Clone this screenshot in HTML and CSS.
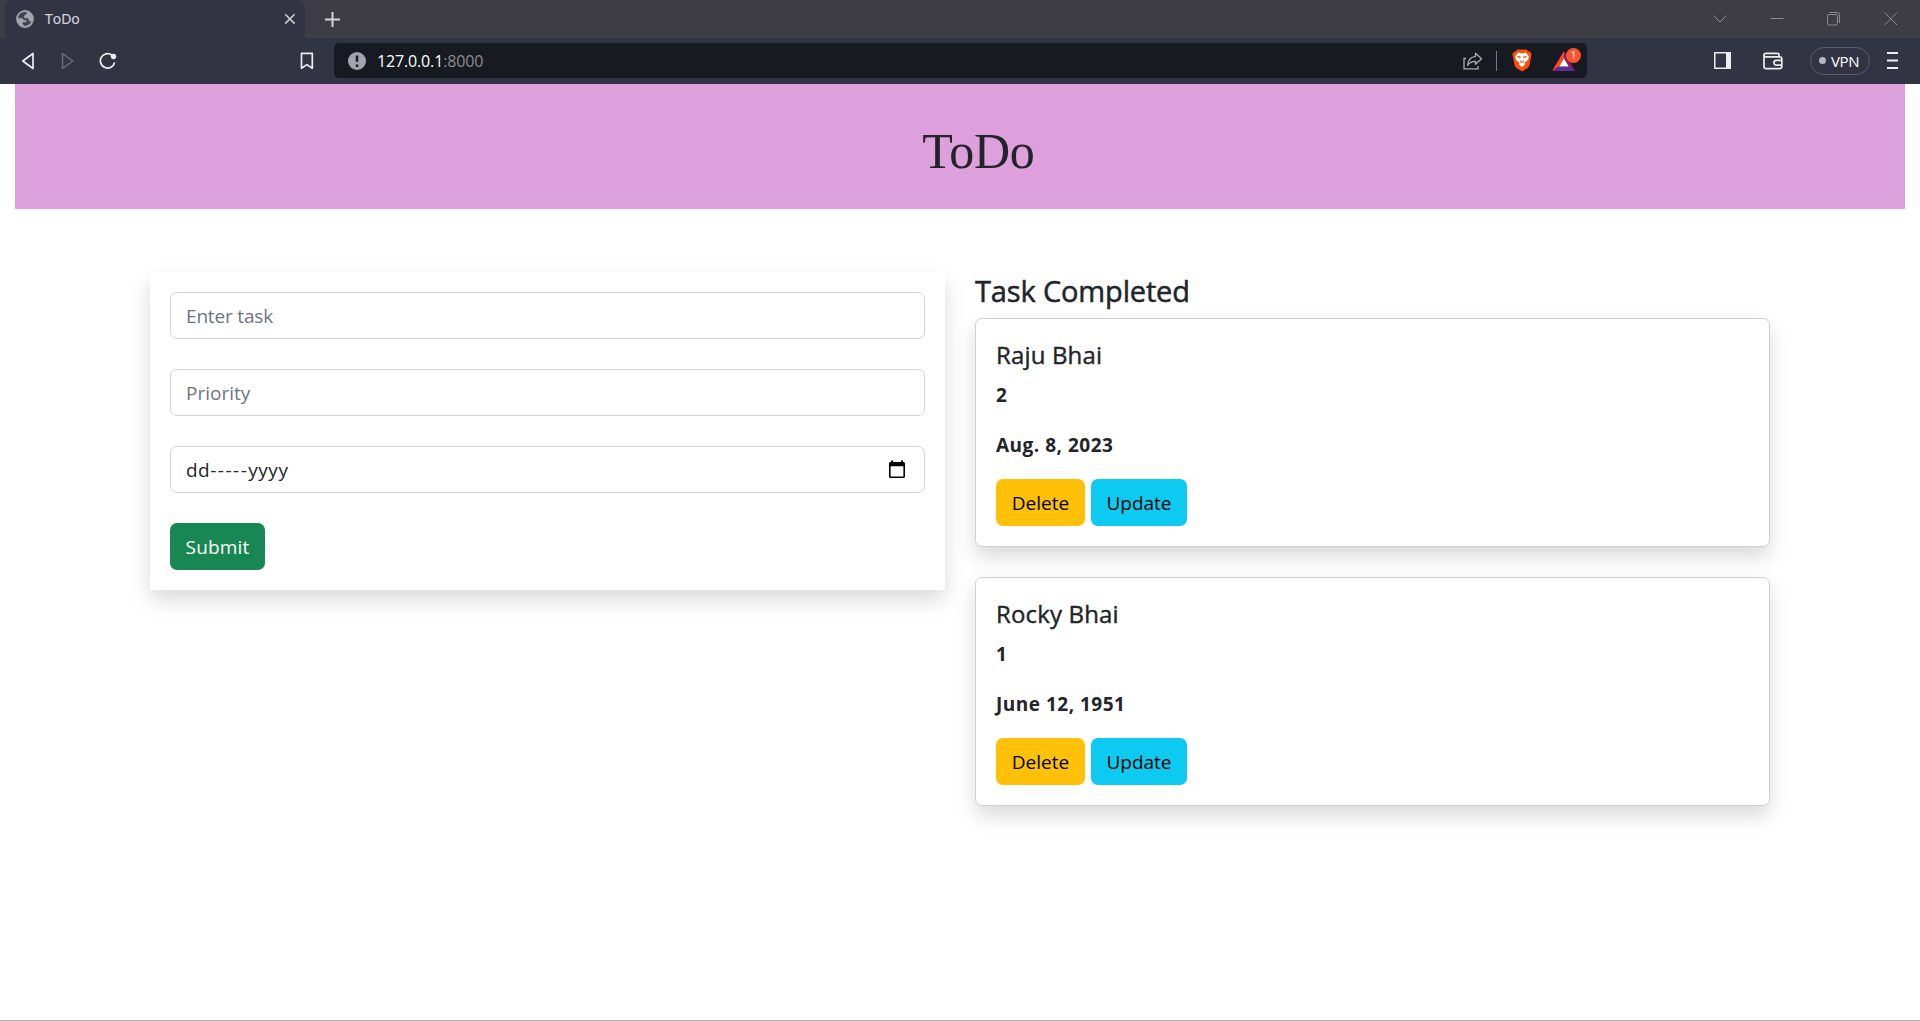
FILE: index.html
```
<!DOCTYPE html>
<html lang="en">
<head>
<meta charset="utf-8">
<title>ToDo</title>
<link rel="stylesheet" href="styles.css">
</head>
<body>
<div class="browser">
  <div class="tabstrip">
    <div class="tab">
      <svg class="favicon" width="18" height="18" viewBox="0 0 18 18"><circle cx="9" cy="9" r="8.900" fill="#a2a5ad"/><path d="M7 2.300Q3.500 3 2.200 6.700V8.300H5.500Q7.600 8.300 7.600 10.200H10.300V12.200H7.200Q6.500 12.200 6.300 13.600L8.600 15.900Q13.800 15.500 15.600 11.200 14.600 11.700 13.500 11.200L12.400 9.800V8.300H9.800Q8.200 8.300 8.200 6.700V5.500H10.300V4.300Q10.300 3.200 11.300 2.500 9 1.800 7 2.300Z" fill="#424551"/><path d="M2 9.500 6.500 13.800V16.500L3 14ZM8.800 4.800V7.200L13 7.500 14 4Z" fill="#a2a5ad"/></svg>
      <span class="tab-title">ToDo</span>
      <svg class="tab-close" width="12" height="12" viewBox="0 0 12 12"><path d="M1.200 1.200 10.600 10.600M10.600 1.200 1.200 10.600" stroke="#cfd0d2" stroke-width="1.500"/></svg>
    </div>
    <svg class="new-tab" width="15" height="15" viewBox="0 0 15 15"><path d="M7.500 0V15M0 7.500H15" stroke="#d5d5d6" stroke-width="2"/></svg>
    <div class="window-controls">
      <svg width="14" height="14" viewBox="0 0 14 14"><path d="M.5 3.500 7 10 13.500 3.500" fill="none" stroke="#8b8b8e"/></svg>
      <svg width="14" height="14" viewBox="0 0 14 14"><path d="M.5 6.500H13.500" stroke="#8b8b8e"/></svg>
      <svg width="14" height="14" viewBox="0 0 14 14"><rect x=".5" y="2.500" width="10" height="10.500" rx="1.500" fill="none" stroke="#8b8b8e"/><path d="M2.500.5H10.500Q12.500.5 12.500 2.500V11" fill="none" stroke="#8b8b8e"/></svg>
      <svg width="14" height="14" viewBox="0 0 14 14"><path d="M.5.5 13 13M13 .5.5 13" stroke="#8b8b8e"/></svg>
    </div>
  </div>
  <div class="toolbar">
    <svg class="back" width="14" height="18" viewBox="0 0 14 18"><path d="M12 1.500V16.500L1.800 9Z" fill="none" stroke="#ecedef" stroke-width="1.700" stroke-linejoin="round"/></svg>
    <svg class="forward" width="14" height="18" viewBox="0 0 14 18"><path d="M1.500 1.500V16.500L11.800 9Z" fill="none" stroke="#6b6d79" stroke-width="1.500" stroke-linejoin="round"/></svg>
    <svg class="reload" width="18" height="18" viewBox="0 0 18 18"><path d="M12.800 3A7.200 7.200 0 1 0 15.600 10.500" fill="none" stroke="#ecedef" stroke-width="1.700"/><circle cx="14.500" cy="4.500" r="2.700" fill="#ecedef"/></svg>
    <svg class="bookmark" width="14" height="18" viewBox="0 0 14 18"><path d="M1.500 1.300H12.300V16.200L6.900 12.600 1.500 16.200Z" fill="none" stroke="#ecedef" stroke-width="1.700" stroke-linejoin="round"/></svg>
    <div class="address">
      <svg class="info" width="18" height="18" viewBox="0 0 18 18"><circle cx="9" cy="9" r="9" fill="#a2a5ad"/><path d="M9 3.500V9.800M9 12.500V15" stroke="#1b1d26" stroke-width="2.500"/></svg>
      <span class="url">127.0.0.1<span class="port">:8000</span></span>
      <svg class="share" width="20" height="18" viewBox="0 0 20 18"><path d="M3 6.500H1V16.800H15V14" fill="none" stroke="#a9abb0" stroke-width="1.300"/><path d="M12.500 1.200 18.600 6.800 12.500 12.300V9.300Q7.800 9 4.600 13.300 5.400 5 12.500 4.300Z" fill="none" stroke="#a9abb0" stroke-width="1.300" stroke-linejoin="round"/></svg>
      <span class="divider"></span>
      <svg class="brave" width="20" height="23" viewBox="0 0 20 23"><path d="M5.500.5H14.500L16.500 2.500H18L19.600 5 19 8 17.300 17 15.500 19 10 22.600 4.500 19 2.700 17 1 8 .4 5 2 2.500H3.500Z" fill="#ff4d0a"/><path d="M6.300 3.600 8.300 4.200H11.700L13.700 3.600 16.900 7.200 15.900 11 12.700 13.600 12.900 15.800 10 18.300 7.100 15.800 7.300 13.600 4.100 11 3.100 7.200Z" fill="#fff"/><path d="M5.200 6.800 8.800 7.600 8.300 9.300 5.800 8.500ZM14.800 6.800 11.200 7.600 11.700 9.300 14.200 8.500ZM8.200 11 9.700 12V13.600L8.400 14.200ZM11.800 11 10.300 12V13.600L11.600 14.200Z" fill="#ff5a1c"/></svg>
      <div class="rewards">
        <svg width="24" height="20" viewBox="0 0 24 20"><path d="M12 0 0 20 7.200 15.500 12 7.500Z" fill="#ff4724"/><path d="M12 0 23 20 16.700 15.500 12 7.500Z" fill="#8f1d66"/><path d="M0 20 7.200 15.500H16.700L23 20Z" fill="#5b3098"/><path d="M12 7.500 16.700 15.500H7.200Z" fill="#fff"/></svg>
        <span class="badge">1</span>
      </div>
    </div>
    <svg class="sidebar" width="17" height="17" viewBox="0 0 17 17"><path d="M.8.8H16.200V16.200H.8Z" fill="none" stroke="#ecedef" stroke-width="1.500"/><path d="M12 0H17V17H12Z" fill="#ecedef"/></svg>
    <svg class="wallet" width="20" height="18" viewBox="0 0 20 18"><path d="M16 4.800V3Q16 1.300 14.300 1.300H3Q1 1.300 1 3V14.500Q1 16.700 3 16.700H16.500Q18.800 16.700 18.800 14.500V7Q18.800 4.800 16.500 4.800H3Q1.200 4.800 1 3" fill="none" stroke="#ecedef" stroke-width="1.700"/><path d="M18.800 8.300H13.300A2.400 2.400 0 0 0 13.300 13.100H18.800" fill="none" stroke="#ecedef" stroke-width="1.700"/></svg>
    <div class="vpn"><span class="dot"></span>VPN</div>
    <svg class="menu" width="11" height="17" viewBox="0 0 11 17"><path d="M0 1H11M0 8.500H11M0 16H11" stroke="#ecedef" stroke-width="1.800"/></svg>
  </div>
</div>
<main class="page">
  <header class="banner"><h1>ToDo</h1></header>
  <div class="columns">
    <form class="task-form">
      <div class="field placeholder task">Enter task</div>
      <div class="field placeholder">Priority</div>
      <div class="field"><span class="date">dd<span class="dashes">-----</span>yyyy</span>
        <svg width="16" height="19" viewBox="0 0 16 19"><path d="M2 .5H4V2H12V.5H14V2H14.500Q16 2 16 3.500V16.500Q16 18 14.500 18H1.500Q0 18 0 16.500V3.500Q0 2 1.500 2H2ZM1.600 6.300V16.500H14.400V6.300Z" fill="#000" fill-rule="evenodd"/></svg>
      </div>
      <button type="button" class="btn submit">Submit</button>
    </form>
    <section class="completed">
      <h4 class="heading">Task Completed</h4>
      <article class="card">
        <h5>Raju Bhai</h5>
        <p>2</p>
        <p>Aug. 8, 2023</p>
        <div class="actions"><button type="button" class="btn delete">Delete</button><button type="button" class="btn update">Update</button></div>
      </article>
      <article class="card">
        <h5>Rocky Bhai</h5>
        <p>1</p>
        <p>June 12, 1951</p>
        <div class="actions"><button type="button" class="btn delete">Delete</button><button type="button" class="btn update">Update</button></div>
      </article>
    </section>
  </div>
</main>
</body>
</html>
```
FILE: styles.css
```
* { box-sizing: border-box; }
body { margin: 0; height: 1021px; overflow: hidden; display: flex; flex-direction: column; background: #fff; color: #212529; font: 19px/30px "Open Sans", "Noto Sans", sans-serif; }
svg { display: block; flex: none; }
.browser { flex: none; }
.tabstrip { height: 38px; display: flex; align-items: center; background: #3e3d46; }
.tab { width: 300px; height: 38px; margin-left: 5px; padding: 0 9px 0 11px; display: flex; align-items: center; background: #323443; border-radius: 8px 8px 0 0; }
.tab-title { margin-left: 11px; font-size: 14px; line-height: 20px; color: #d5d6da; -webkit-text-stroke: .2px currentColor; }
.tab-close { margin-left: auto; }
.new-tab { margin-left: 20px; }
.window-controls { margin-left: auto; padding-right: 22px; display: flex; gap: 43px; }
.toolbar { height: 46px; padding: 0 0 1px 21px; display: flex; align-items: center; background: #323443; }
.forward { margin-left: 26px; }
.reload { margin-left: 24px; }
.bookmark { margin-left: 183px; }
.address { width: 1253px; height: 35px; margin-left: 20px; padding-left: 14px; display: flex; align-items: center; background: #171a21; border-radius: 5px; }
.url { margin-left: 11px; font-size: 16px; line-height: 22px; letter-spacing: -.15px; color: #fff; display: flex; }
.port { color: #8b8d91; }
.share { margin-left: auto; }
.divider { width: 1px; height: 20px; margin: 0 15px 0 13px; background: #77797e; }
.rewards { position: relative; margin: 0 11px 0 20px; }
.badge { position: absolute; left: 14px; top: -3px; width: 15px; height: 15px; border-radius: 50%; background: #fb542b; color: #fff; font-size: 10px; line-height: 15px; text-align: center; }
.sidebar { margin-left: 127px; }
.wallet { margin-left: 32px; }
.vpn { width: 60px; height: 28px; margin-left: 27px; padding-left: 8px; display: flex; align-items: center; border: 1px solid #5a5c70; border-radius: 14px; font-size: 15px; line-height: 20px; letter-spacing: -.4px; color: #fff; }
.dot { width: 7px; height: 7px; margin-right: 5px; border-radius: 50%; background: #b4b5c5; }
.menu { margin-left: 17px; }
.page { flex: 1; border-bottom: 1px solid #b0b0b0; }
.banner { height: 125px; margin: 0 15px; padding: 37px 0 0 37px; background: #dda0dd; text-align: center; }
.banner h1 { margin: 0; font: 400 50px/60px "Liberation Serif", serif; letter-spacing: -.2px; }
.columns { display: grid; grid-template-columns: 795px 795px; gap: 30px; align-items: start; padding: 63px 150px 0; }
.task-form { padding: 20px; display: flex; flex-direction: column; align-items: flex-start; gap: 30px; background: #fff; box-shadow: 0 10px 20px rgba(0,0,0,.15); }
.field { width: 100%; height: 47px; padding: 0 19px 0 15px; display: flex; align-items: center; justify-content: space-between; border: 1px solid #ced4da; border-radius: 7px; }
.placeholder { color: #6c757d; }
.task { letter-spacing: -.17px; }
.date { letter-spacing: .5px; }
.dashes { letter-spacing: 1.5px; }
.btn { height: 47px; padding: 0; border: 0; border-radius: 7px; font: inherit; color: #000; }
.submit { width: 95px; background: #198754; color: #fff; letter-spacing: .15px; }
.completed { display: flow-root; }
.heading { margin: 0 0 9px; padding-top: 1px; font-size: 29px; font-weight: 400; line-height: 36px; letter-spacing: -.15px; -webkit-text-stroke: .5px currentColor; }
.card { height: 229px; margin-bottom: 30px; padding: 21px 20px 20px; background: #fff; border: 1px solid #d0d0d0; border-radius: 7px; box-shadow: 0 10px 20px rgba(0,0,0,.15); }
.card h5 { margin: 0 0 10px; font-size: 24px; font-weight: 400; line-height: 30px; letter-spacing: .15px; -webkit-text-stroke: .4px currentColor; }
.card p { margin: 0 0 20px; font-weight: 700; letter-spacing: .5px; }
.card p:nth-of-type(2) { margin-bottom: 19px; }
.actions { display: flex; gap: 6px; }
.delete { width: 89px; background: #ffc107; }
.update { width: 96px; background: #0dcaf0; }
```
